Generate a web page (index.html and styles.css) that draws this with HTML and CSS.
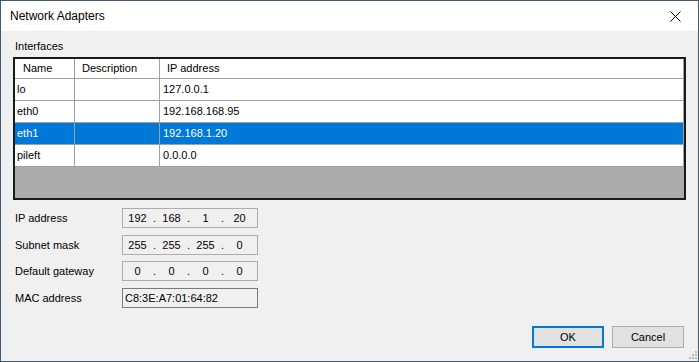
FILE: index.html
```html
<!DOCTYPE html>
<html lang="en">
<head>
    <meta charset="UTF-8">
    <meta name="viewport" content="width=device-width, initial-scale=1.0">
    <title>Network Adapters</title>
    <link rel="stylesheet" href="styles.css">
</head>
<body>
    <div class="window">
        <!-- Title bar -->
        <div class="titlebar">
            <span class="title">Network Adapters</span>
            <button class="close-btn" aria-label="Close">
                <svg width="11" height="11" viewBox="0 0 11 11">
                    <path d="M0.5 0.5 L10.5 10.5 M10.5 0.5 L0.5 10.5" stroke="#000" stroke-width="1" fill="none"/>
                </svg>
            </button>
        </div>

        <div class="content">
            <div class="group-label">Interfaces</div>

            <div class="grid">
                <div class="grid-row grid-head">
                    <div class="cell col-name">Name</div>
                    <div class="cell col-desc">Description</div>
                    <div class="cell col-ip">IP address</div>
                </div>
                <div class="grid-row">
                    <div class="cell col-name">lo</div>
                    <div class="cell col-desc"></div>
                    <div class="cell col-ip">127.0.0.1</div>
                </div>
                <div class="grid-row">
                    <div class="cell col-name">eth0</div>
                    <div class="cell col-desc"></div>
                    <div class="cell col-ip">192.168.168.95</div>
                </div>
                <div class="grid-row selected">
                    <div class="cell col-name">eth1</div>
                    <div class="cell col-desc"></div>
                    <div class="cell col-ip">192.168.1.20</div>
                </div>
                <div class="grid-row">
                    <div class="cell col-name">pileft</div>
                    <div class="cell col-desc"></div>
                    <div class="cell col-ip">0.0.0.0</div>
                </div>
                <div class="grid-empty"></div>
            </div>

            <div class="fields">
                <div class="field">
                    <span class="field-label">IP address</span>
                    <div class="ip-box">
                        <span class="octet">192</span><span class="dot">.</span>
                        <span class="octet">168</span><span class="dot">.</span>
                        <span class="octet">1</span><span class="dot">.</span>
                        <span class="octet">20</span>
                    </div>
                </div>
                <div class="field">
                    <span class="field-label">Subnet mask</span>
                    <div class="ip-box">
                        <span class="octet">255</span><span class="dot">.</span>
                        <span class="octet">255</span><span class="dot">.</span>
                        <span class="octet">255</span><span class="dot">.</span>
                        <span class="octet">0</span>
                    </div>
                </div>
                <div class="field">
                    <span class="field-label">Default gateway</span>
                    <div class="ip-box">
                        <span class="octet">0</span><span class="dot">.</span>
                        <span class="octet">0</span><span class="dot">.</span>
                        <span class="octet">0</span><span class="dot">.</span>
                        <span class="octet">0</span>
                    </div>
                </div>
                <div class="field">
                    <span class="field-label">MAC address</span>
                    <div class="text-box">C8:3E:A7:01:64:82</div>
                </div>
            </div>

            <div class="buttons">
                <button class="btn btn-default">OK</button>
                <button class="btn">Cancel</button>
            </div>
        </div>

        <!-- Size grip -->
        <svg class="grip" width="8" height="8" viewBox="0 0 8 8">
            <rect x="6" y="0" width="2" height="2" fill="#bcbcbc"/>
            <rect x="3" y="3" width="2" height="2" fill="#bcbcbc"/>
            <rect x="6" y="3" width="2" height="2" fill="#bcbcbc"/>
            <rect x="0" y="6" width="2" height="2" fill="#bcbcbc"/>
            <rect x="3" y="6" width="2" height="2" fill="#bcbcbc"/>
            <rect x="6" y="6" width="2" height="2" fill="#bcbcbc"/>
        </svg>
    </div>
</body>
</html>
```

FILE: styles.css
```css
/* Dialog styles */
* {
    margin: 0;
    padding: 0;
    box-sizing: border-box;
    font-family: 'Liberation Sans', Arial, sans-serif;
}

body {
    background-color: #f0f0f0;
    color: #000;
    font-size: 11px;
}

.window {
    position: relative;
    width: 699px;
    height: 362px;
    border: 1px solid #41586e;
    display: flex;
    flex-direction: column;
    background-color: #f0f0f0;
}

.titlebar {
    height: 30px;
    background-color: #fff;
    display: flex;
    align-items: center;
    justify-content: space-between;
    padding-left: 9px;
}

.title {
    font-size: 12px;
    color: #000;
}

.close-btn {
    width: 46px;
    height: 30px;
    border: none;
    background: transparent;
    display: flex;
    align-items: center;
    justify-content: center;
}

.content {
    flex: 1;
    display: flex;
    flex-direction: column;
    padding: 9px 12px 13px 12px;
}

.group-label {
    height: 13px;
    line-height: 13px;
    padding-left: 2px;
    margin-bottom: 4px;
}

/* Interfaces grid */
.grid {
    height: 143px;
    border: 2px solid #1a1a1a;
    background-color: #ababab;
    display: flex;
    flex-direction: column;
}

.grid-row {
    display: flex;
    height: 22px;
    background-color: #fff;
    border-bottom: 1px solid #a0a0a0;
}

.grid-head {
    height: 20px;
}

.cell {
    border-right: 1px solid #a0a0a0;
    line-height: 20px;
    white-space: nowrap;
}

.grid-head .cell {
    line-height: 19px;
}

.col-name {
    width: 60px;
    padding-left: 2px;
}

.col-desc {
    width: 85px;
}

.col-ip {
    flex: 1;
    padding-left: 3px;
}

.grid-head .col-name {
    padding-left: 8px;
}

.grid-head .col-desc,
.grid-head .col-ip {
    padding-left: 7px;
}

.selected {
    background-color: #0078d7;
    color: #fff;
}

.grid-empty {
    flex: 1;
}

/* Address fields */
.fields {
    display: flex;
    flex-direction: column;
    gap: 6.5px;
    margin-top: 8px;
    padding-left: 2px;
}

.field {
    display: flex;
    align-items: center;
    height: 20px;
}

.field-label {
    width: 107px;
}

.ip-box,
.text-box {
    width: 136px;
    height: 20px;
    display: flex;
    align-items: center;
}

.ip-box {
    border: 1px solid #acacac;
    padding-left: 1px;
}

.octet {
    width: 27px;
    text-align: center;
}

.dot {
    width: 7px;
    text-align: center;
}

.text-box {
    border: 1px solid #7a7a7a;
    padding-left: 2px;
}

/* Dialog buttons */
.buttons {
    margin-top: auto;
    display: flex;
    justify-content: flex-end;
    gap: 8px;
    padding-right: 2px;
}

.btn {
    width: 72px;
    height: 22px;
    background-color: #e1e1e1;
    border: 1px solid #adadad;
    font-size: 11px;
    color: #000;
}

.btn-default {
    border: 2px solid #0078d7;
}

.grip {
    position: absolute;
    right: 1px;
    bottom: 2px;
}
```
